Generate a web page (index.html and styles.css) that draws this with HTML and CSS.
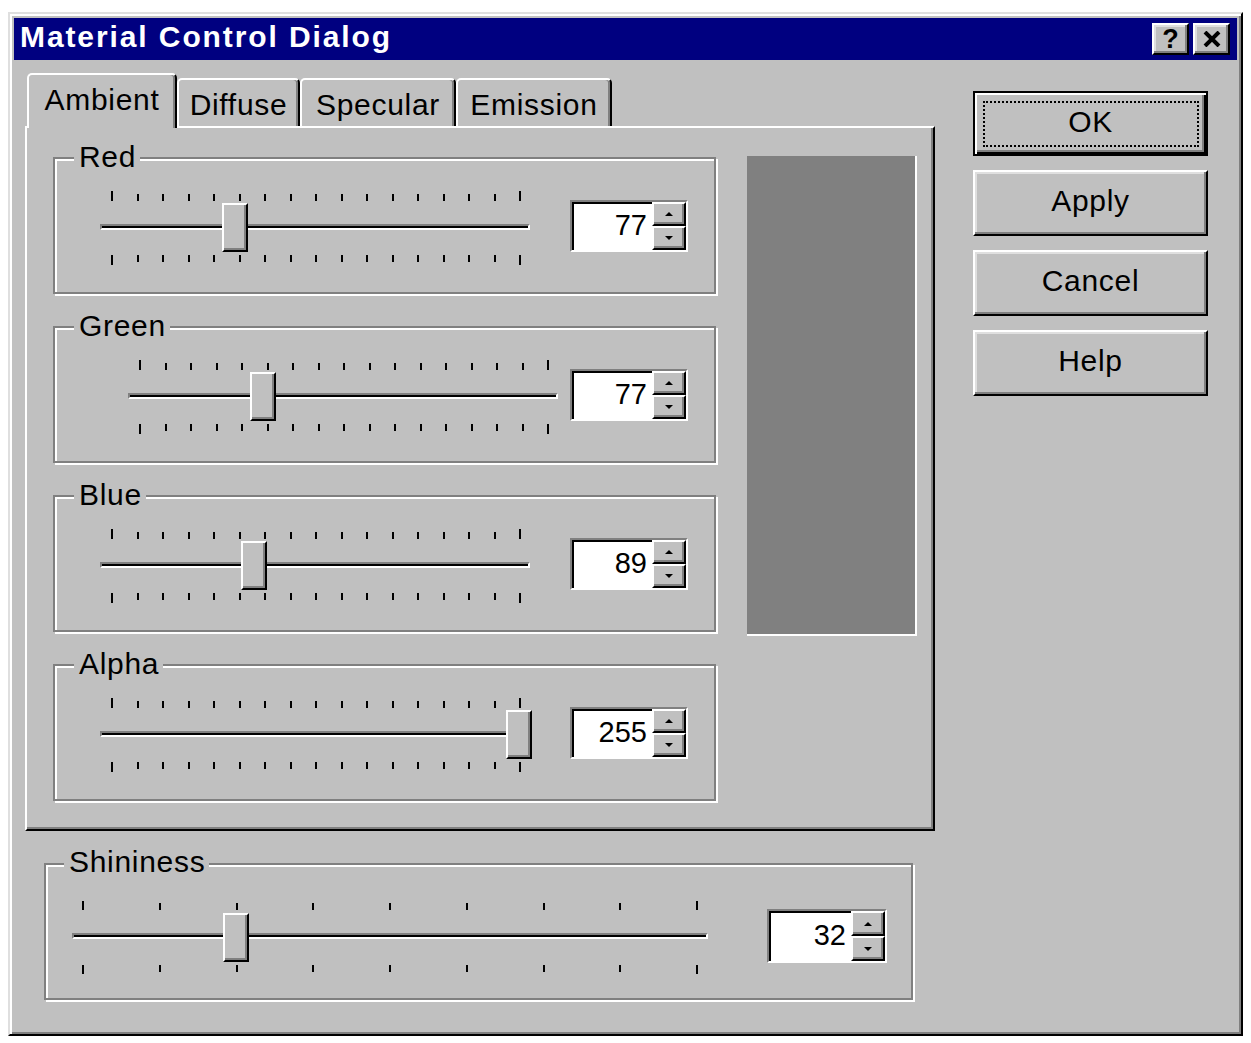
FILE: index.html
```html
<!DOCTYPE html>
<html>
<head>
<meta charset="utf-8">
<title>Material Control Dialog</title>
<link rel="stylesheet" href="styles.css">
</head>
<body>
<div class="dialog">
  <div class="titlebar">
    <span class="title">Material Control Dialog</span>
    <div class="tbtns">
      <div class="tbtn"><span class="qmark">?</span></div>
      <div class="tbtn"><svg width="18" height="16" viewBox="0 0 18 16"><path d="M2 1 L16 15 M16 1 L2 15" stroke="#000" stroke-width="4" fill="none"/></svg></div>
    </div>
  </div>
  <div class="main">
    <div class="left">
      <div class="tabs">
        <div class="tab active w1">Ambient</div>
        <div class="tab w2">Diffuse</div>
        <div class="tab w3">Specular</div>
        <div class="tab w4">Emission</div>
      </div>
      <div class="panel">
        <div class="groups">
          <div class="group">
            <span class="glabel">Red</span>
            <div class="slider">
              <div class="ticks top"><i class="tick long"></i><i class="tick"></i><i class="tick"></i><i class="tick"></i><i class="tick"></i><i class="tick"></i><i class="tick"></i><i class="tick"></i><i class="tick"></i><i class="tick"></i><i class="tick"></i><i class="tick"></i><i class="tick"></i><i class="tick"></i><i class="tick"></i><i class="tick"></i><i class="tick long"></i></div>
              <div class="track"><div class="channel"></div><div class="thumb" style="left:122px"></div></div>
              <div class="ticks bottom"><i class="tick long"></i><i class="tick"></i><i class="tick"></i><i class="tick"></i><i class="tick"></i><i class="tick"></i><i class="tick"></i><i class="tick"></i><i class="tick"></i><i class="tick"></i><i class="tick"></i><i class="tick"></i><i class="tick"></i><i class="tick"></i><i class="tick"></i><i class="tick"></i><i class="tick long"></i></div>
            </div>
            <div class="spin"><div class="val">77</div><div class="sbtns"><div class="sb"><i class="arr up"></i></div><div class="sb"><i class="arr down"></i></div></div></div>
          </div>
          <div class="group shifted">
            <span class="glabel">Green</span>
            <div class="slider">
              <div class="ticks top"><i class="tick long"></i><i class="tick"></i><i class="tick"></i><i class="tick"></i><i class="tick"></i><i class="tick"></i><i class="tick"></i><i class="tick"></i><i class="tick"></i><i class="tick"></i><i class="tick"></i><i class="tick"></i><i class="tick"></i><i class="tick"></i><i class="tick"></i><i class="tick"></i><i class="tick long"></i></div>
              <div class="track"><div class="channel"></div><div class="thumb" style="left:122px"></div></div>
              <div class="ticks bottom"><i class="tick long"></i><i class="tick"></i><i class="tick"></i><i class="tick"></i><i class="tick"></i><i class="tick"></i><i class="tick"></i><i class="tick"></i><i class="tick"></i><i class="tick"></i><i class="tick"></i><i class="tick"></i><i class="tick"></i><i class="tick"></i><i class="tick"></i><i class="tick"></i><i class="tick long"></i></div>
            </div>
            <div class="spin"><div class="val">77</div><div class="sbtns"><div class="sb"><i class="arr up"></i></div><div class="sb"><i class="arr down"></i></div></div></div>
          </div>
          <div class="group">
            <span class="glabel">Blue</span>
            <div class="slider">
              <div class="ticks top"><i class="tick long"></i><i class="tick"></i><i class="tick"></i><i class="tick"></i><i class="tick"></i><i class="tick"></i><i class="tick"></i><i class="tick"></i><i class="tick"></i><i class="tick"></i><i class="tick"></i><i class="tick"></i><i class="tick"></i><i class="tick"></i><i class="tick"></i><i class="tick"></i><i class="tick long"></i></div>
              <div class="track"><div class="channel"></div><div class="thumb" style="left:141px"></div></div>
              <div class="ticks bottom"><i class="tick long"></i><i class="tick"></i><i class="tick"></i><i class="tick"></i><i class="tick"></i><i class="tick"></i><i class="tick"></i><i class="tick"></i><i class="tick"></i><i class="tick"></i><i class="tick"></i><i class="tick"></i><i class="tick"></i><i class="tick"></i><i class="tick"></i><i class="tick"></i><i class="tick long"></i></div>
            </div>
            <div class="spin"><div class="val">89</div><div class="sbtns"><div class="sb"><i class="arr up"></i></div><div class="sb"><i class="arr down"></i></div></div></div>
          </div>
          <div class="group">
            <span class="glabel">Alpha</span>
            <div class="slider">
              <div class="ticks top"><i class="tick long"></i><i class="tick"></i><i class="tick"></i><i class="tick"></i><i class="tick"></i><i class="tick"></i><i class="tick"></i><i class="tick"></i><i class="tick"></i><i class="tick"></i><i class="tick"></i><i class="tick"></i><i class="tick"></i><i class="tick"></i><i class="tick"></i><i class="tick"></i><i class="tick long"></i></div>
              <div class="track"><div class="channel"></div><div class="thumb" style="left:406px"></div></div>
              <div class="ticks bottom"><i class="tick long"></i><i class="tick"></i><i class="tick"></i><i class="tick"></i><i class="tick"></i><i class="tick"></i><i class="tick"></i><i class="tick"></i><i class="tick"></i><i class="tick"></i><i class="tick"></i><i class="tick"></i><i class="tick"></i><i class="tick"></i><i class="tick"></i><i class="tick"></i><i class="tick long"></i></div>
            </div>
            <div class="spin"><div class="val">255</div><div class="sbtns"><div class="sb"><i class="arr up"></i></div><div class="sb"><i class="arr down"></i></div></div></div>
          </div>
        </div>
        <div class="preview"></div>
      </div>
      <div class="group shin">
        <span class="glabel">Shininess</span>
        <div class="slider">
          <div class="ticks top"><i class="tick long"></i><i class="tick"></i><i class="tick"></i><i class="tick"></i><i class="tick"></i><i class="tick"></i><i class="tick"></i><i class="tick"></i><i class="tick long"></i></div>
          <div class="track"><div class="channel"></div><div class="thumb" style="left:151px"></div></div>
          <div class="ticks bottom"><i class="tick long"></i><i class="tick"></i><i class="tick"></i><i class="tick"></i><i class="tick"></i><i class="tick"></i><i class="tick"></i><i class="tick"></i><i class="tick long"></i></div>
        </div>
        <div class="spin"><div class="val">32</div><div class="sbtns"><div class="sb"><i class="arr up"></i></div><div class="sb"><i class="arr down"></i></div></div></div>
      </div>
    </div>
    <div class="buttons">
      <div class="btn default">OK</div>
      <div class="btn">Apply</div>
      <div class="btn">Cancel</div>
      <div class="btn">Help</div>
    </div>
  </div>
</div>
</body>
</html>
```

FILE: styles.css
```css
body {
  margin: 0;
  background: #ffffff;
  font-family: "Liberation Sans", Arial, sans-serif;
  color: #000;
}

.dialog {
  margin: 12px 0 0 8px;
  width: 1235px;
  height: 1024px;
  box-sizing: border-box;
  background: #c0c0c0;
  border: 2px solid;
  border-color: #dfdfdf #000 #000 #dfdfdf;
  box-shadow: inset 2px 2px #fff, inset -2px -2px #808080;
  padding: 4px;
}

.titlebar {
  height: 42px;
  background: #000080;
  display: flex;
  align-items: center;
  justify-content: space-between;
  padding: 0 7px 0 6px;
}

.title {
  color: #fff;
  font-weight: bold;
  font-size: 30px;
  line-height: 30px;
  letter-spacing: 1.9px;
  margin-top: -5px;
}

.tbtns {
  display: flex;
  gap: 4px;
}

.tbtn {
  width: 37px;
  height: 32px;
  box-sizing: border-box;
  background: #c0c0c0;
  border: 2px solid;
  border-color: #fff #000 #000 #fff;
  box-shadow: inset -2px -2px #808080, inset 2px 2px #dfdfdf;
  display: flex;
  align-items: center;
  justify-content: center;
}

.qmark {
  font-weight: bold;
  font-size: 27px;
  line-height: 27px;
  margin-top: 1px;
}

.main {
  display: flex;
  padding: 13px 0 0 11px;
}

.left {
  width: 910px;
}

.tabs {
  display: flex;
  align-items: flex-end;
  height: 55px;
  margin-bottom: -2px;
  padding-left: 2px;
  position: relative;
  z-index: 1;
}

.tab {
  box-sizing: border-box;
  height: 48px;
  margin-bottom: 2px;
  background: #c0c0c0;
  border: 2px solid;
  border-bottom: none;
  border-color: #fff #000 transparent #fff;
  border-radius: 5px 5px 0 0;
  box-shadow: inset -2px 0 #808080;
  font-size: 30px;
  line-height: 30px;
  letter-spacing: 0.7px;
  padding-top: 10px;
  text-align: center;
}

.tab.active {
  height: 55px;
  margin-bottom: 0;
}

.w1 { width: 150px; }
.w2 { width: 123px; }
.w3 { width: 156px; }
.w4 { width: 156px; }

.panel {
  box-sizing: border-box;
  width: 910px;
  height: 705px;
  border: 2px solid;
  border-color: #fff #000 #000 #fff;
  box-shadow: inset -2px -2px #808080;
  display: flex;
  align-items: flex-start;
  padding: 29px 0 0 26px;
}

.groups {
  width: 665px;
  display: flex;
  flex-direction: column;
  gap: 32px;
}

.group {
  position: relative;
  box-sizing: border-box;
  width: 663px;
  height: 137px;
  border: 2px solid #808080;
  box-shadow: inset 2px 2px #fff, 2px 2px #fff;
  display: flex;
  align-items: flex-start;
  padding: 0 26px 0 45px;
}

.group.shifted {
  padding-left: 73px;
}

.glabel {
  position: absolute;
  left: 19px;
  top: -17px;
  padding: 0 4px 0 5px;
  background: #c0c0c0;
  font-size: 30px;
  line-height: 30px;
  letter-spacing: 0.7px;
}

.slider {
  width: 430px;
  margin-top: 32px;
}

.ticks {
  display: flex;
  justify-content: space-between;
  padding: 0 9px 0 11px;
  height: 10px;
}

.ticks.top { align-items: flex-end; }
.ticks.bottom { align-items: flex-start; margin-top: 2px; }

.tick {
  display: block;
  width: 2px;
  height: 7px;
  background: #000;
}

.tick.long { height: 10px; }

.track {
  position: relative;
  box-sizing: border-box;
  height: 52px;
  padding-top: 23px;
}

.channel {
  box-sizing: border-box;
  height: 6px;
  border-top: 2px solid #808080;
  border-left: 2px solid #808080;
  border-bottom: 2px solid #fff;
  border-right: 2px solid #fff;
  box-shadow: inset 0 2px #000;
}

.thumb {
  position: absolute;
  top: 2px;
  width: 26px;
  height: 49px;
  box-sizing: border-box;
  background: #c0c0c0;
  border: 2px solid;
  border-color: #fff #000 #000 #fff;
  box-shadow: inset -2px -2px #808080;
}

.spin {
  margin-top: 41px;
  margin-left: auto;
  width: 118px;
  height: 52px;
  box-sizing: border-box;
  border: 2px solid;
  border-color: #808080 #fff #fff #808080;
  display: flex;
  background: #fff;
}

.val {
  flex: 1;
  box-sizing: border-box;
  border-top: 2px solid #000;
  border-left: 2px solid #000;
  display: flex;
  align-items: center;
  justify-content: flex-end;
  padding: 0 5px 4px 0;
  font-size: 29px;
  line-height: 29px;
}

.sbtns {
  width: 34px;
  display: flex;
  flex-direction: column;
  background: #000;
}

.sb {
  flex: 1;
  box-sizing: border-box;
  background: #c0c0c0;
  border: 2px solid;
  border-color: #fff #000 #000 #fff;
  box-shadow: inset -2px -2px #808080;
  display: flex;
  align-items: center;
  justify-content: center;
}

.arr {
  display: block;
  width: 0;
  height: 0;
  border-left: 4px solid transparent;
  border-right: 4px solid transparent;
}

.arr.up { border-bottom: 4px solid #000; }
.arr.down { border-top: 4px solid #000; }

.preview {
  box-sizing: border-box;
  width: 170px;
  height: 480px;
  margin-left: 29px;
  margin-top: -1px;
  background: #808080;
  border-right: 2px solid #fff;
  border-bottom: 2px solid #fff;
}

.group.shin {
  width: 869px;
  margin: 32px 0 0 19px;
  padding: 0 24px 0 26px;
}

.group.shin .glabel {
  left: 18px;
  top: -18px;
}

.group.shin .slider {
  width: 636px;
  margin-top: 36px;
}

.group.shin .ticks {
  padding: 0 10px;
  height: 9px;
}

.group.shin .tick.long { height: 9px; }

.group.shin .track { height: 53px; }

.group.shin .thumb { top: 3px; }

.group.shin .spin {
  margin-top: 44px;
  width: 120px;
  height: 54px;
}

.buttons {
  width: 235px;
  margin: 18px 0 0 38px;
  display: flex;
  flex-direction: column;
  gap: 14px;
}

.btn {
  position: relative;
  box-sizing: border-box;
  height: 66px;
  background: #c0c0c0;
  border: 2px solid;
  border-color: #fff #000 #000 #fff;
  box-shadow: inset -2px -2px #808080, inset 2px 2px #dfdfdf;
  display: flex;
  align-items: center;
  justify-content: center;
  padding-bottom: 4px;
  font-size: 30px;
  line-height: 30px;
  letter-spacing: 0.7px;
}

.btn.default {
  height: 65px;
  border-color: #000;
  box-shadow: inset 2px 2px #fff, inset -2px -2px #000, inset -4px -4px #808080;
}

.btn.default::after {
  content: "";
  position: absolute;
  top: 8px;
  left: 8px;
  right: 7px;
  bottom: 7px;
  border: 2px dotted #000;
}
```
